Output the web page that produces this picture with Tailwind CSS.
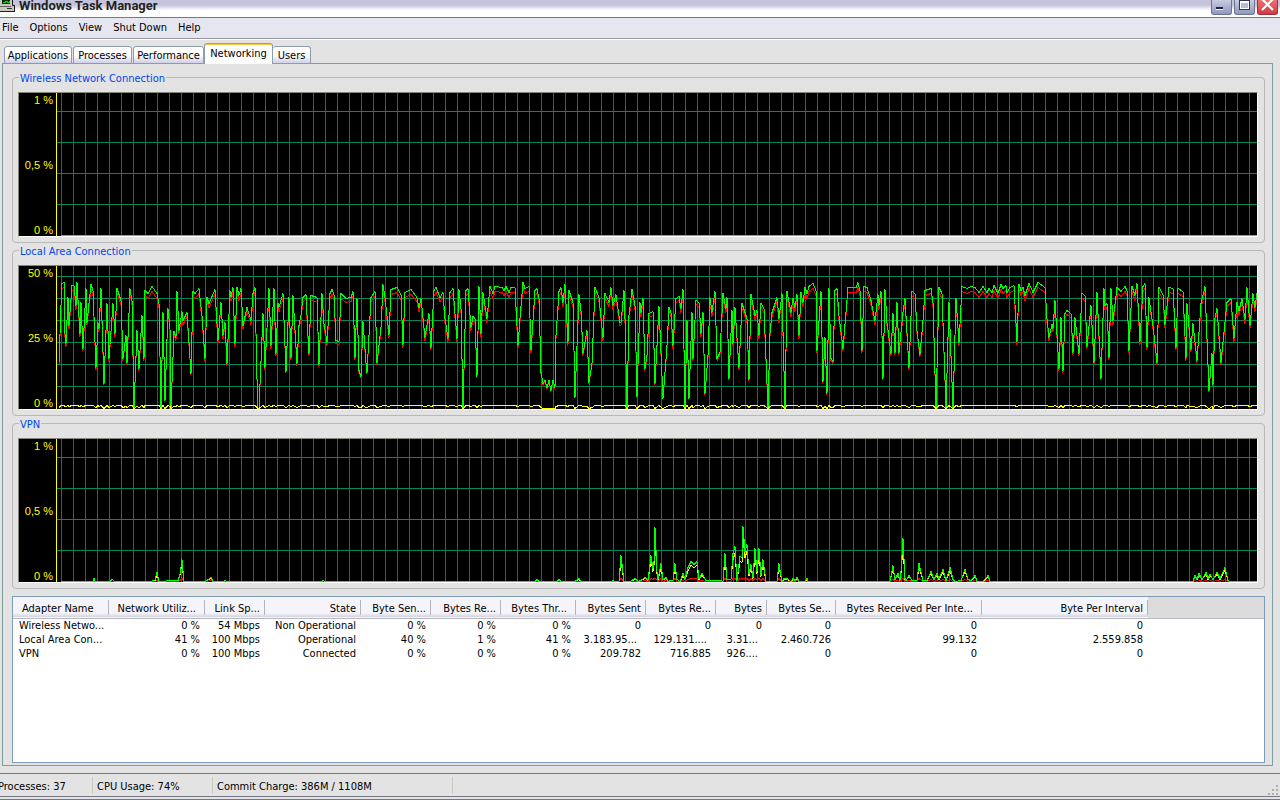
<!doctype html>
<html lang="en">
<head>
  <meta charset="UTF-8">
  <meta name="viewport" content="width=device-width, initial-scale=1.0">
  <title>Windows Task Manager</title>
  <script src="https://cdn.jsdelivr.net/npm/@tailwindcss/browser@4"></script>
</head>
<body class="flex h-screen flex-col overflow-hidden bg-[#e4e3e4] font-['DejaVu_Sans_Condensed','Noto_Sans',sans-serif] text-[11px] leading-[14px] text-black">
  <!-- Title bar -->
  <header class="flex h-[18px] shrink-0 items-start border-b border-[#77778a] bg-linear-to-b from-[#c4c4dc] from-30% to-white to-60% pr-[2px]">
    <svg class="h-4 w-[19px] shrink-0" viewBox="0 0 19 16" shape-rendering="crispEdges" aria-hidden="true">
      <path d="M0 0h12v6h2v5h-14z" fill="#c8c8c0" />
      <path d="M2 0h8v4h-8z" fill="#003000" />
      <path d="M3 2.5h2v-1h2v1h2v-1h1" fill="none" stroke="#00e000" />
      <path d="M12.5 0v5.500h2v6h-14.500" fill="none" stroke="#202020" />
      <path d="M0 6h11" fill="none" stroke="#606060" />
      <path d="M7 8h5v1h-5z" fill="#303030" />
    </svg>
    <h1 class="flex-1 font-[Roboto,sans-serif] text-[13px] leading-[12px] font-bold text-[#222]">Windows Task Manager</h1>
    <div class="flex gap-[2px]">
      <button aria-label="Minimize" class="h-[15px] w-[21px] rounded-b-[3px] border border-t-0 border-[#6c7494] bg-linear-to-b from-[#c8cce0] to-[#9098c0]"><svg viewBox="0 0 19 14" shape-rendering="crispEdges"><path d="M4 7h7v2h-7z" fill="#222244" /><path d="M4 9h7v1h-7z" fill="#fff" /></svg></button>
      <button aria-label="Maximize" class="h-[15px] w-[21px] rounded-b-[3px] border border-t-0 border-[#6c7494] bg-linear-to-b from-[#c8cce0] to-[#9098c0]"><svg viewBox="0 0 19 14" shape-rendering="crispEdges"><path d="M4 0h11v10h-11z" fill="#333355" /><path d="M5 1h9v8h-9z" fill="#fff" /><path d="M6 3h7v5h-7z" fill="#b8bcd8" /></svg></button>
      <button aria-label="Close" class="h-[15px] w-[21px] rounded-b-[3px] border border-t-0 border-[#a03040] bg-linear-to-b from-[#f07070] to-[#d03a40]"><svg viewBox="0 0 19 14"><path d="M4 -1l11 11M15 -1l-11 11" stroke="#fff" stroke-width="2" /></svg></button>
    </div>
  </header>

  <!-- Menu -->
  <nav class="flex h-[21px] shrink-0 items-center gap-[11px] border-b border-[#9494a4] bg-[#e6e6f0] px-[2px] pb-px shadow-[0_1px_0_#fff]">
    <button>File</button>
    <button>Options</button>
    <button>View</button>
    <button>Shut Down</button>
    <button>Help</button>
  </nav>

  <!-- Tabs -->
  <div role="tablist" class="relative z-10 -mb-px flex h-[25px] shrink-0 items-end pl-1 *:whitespace-nowrap">
    <button role="tab" class="mr-px h-[18px] w-[68px] rounded-t-[3px] border border-[#8c9cac] bg-linear-to-b from-white from-50% to-[#d0d0e8] pt-px">Applications</button>
    <button role="tab" class="mr-px h-[18px] w-[59px] rounded-t-[3px] border border-[#8c9cac] bg-linear-to-b from-white from-50% to-[#d0d0e8] pt-px">Processes</button>
    <button role="tab" class="h-[18px] w-[71px] rounded-t-[3px] border border-[#8c9cac] bg-linear-to-b from-white from-50% to-[#d0d0e8] pt-px">Performance</button>
    <button role="tab" aria-selected="true" class="h-[21px] w-[69px] rounded-t-[3px] border border-b-0 border-[#8c9cac] border-t-[#e68b2c] bg-white pb-px shadow-[inset_0_1px_0_#ffc73c]">Networking</button>
    <button role="tab" class="h-[18px] w-[38px] rounded-t-[3px] border border-l-0 border-[#8c9cac] bg-linear-to-b from-white from-50% to-[#d0d0e8] pt-px">Users</button>
  </div>

  <main class="mr-[7px] ml-[2px] flex min-h-0 flex-1 flex-col border border-[#7f9d9d] pt-[6px] pr-[7px] pb-[2px] pl-[9px]">
    <fieldset class="min-w-0 rounded border border-[#b8b8b8] pt-2 pr-[6px] pb-[5px] pl-[5px]">
      <legend class="ml-px px-px pt-1 leading-[10px] text-[#0046e5]">Wireless Network Connection</legend>
      <div class="flex h-[145px] border border-t-[#85857a] border-r-white border-b-white border-l-[#85857a] bg-black">
        <div class="flex w-[38px] shrink-0 flex-col justify-between border-r border-[#ff0] pt-px pr-[3px] text-right font-['Liberation_Sans',sans-serif] leading-3 text-[#ff0]"><span>1 %</span><span>0,5 %</span><span>0 %</span></div>
        <svg class="min-w-0 flex-1" viewBox="0 0 1200 143" preserveAspectRatio="none" shape-rendering="crispEdges" fill="none" data-chart="wireless" data-first="18" data-step="31"></svg>
      </div>
    </fieldset>
    <fieldset class="min-w-0 rounded border border-[#b8b8b8] pt-2 pr-[6px] pb-[5px] pl-[5px]">
      <legend class="ml-px px-px pt-1 leading-[10px] text-[#0046e5]">Local Area Connection</legend>
      <div class="flex h-[145px] border border-t-[#85857a] border-r-white border-b-white border-l-[#85857a] bg-black">
        <div class="flex w-[38px] shrink-0 flex-col justify-between border-r border-[#ff0] pt-px pr-[3px] text-right font-['Liberation_Sans',sans-serif] leading-3 text-[#ff0]"><span>50 %</span><span>25 %</span><span>0 %</span></div>
        <svg class="min-w-0 flex-1" viewBox="0 0 1200 143" preserveAspectRatio="none" shape-rendering="crispEdges" fill="none" data-chart="lan" data-first="10" data-step="22"></svg>
      </div>
    </fieldset>
    <fieldset class="min-w-0 rounded border border-[#b8b8b8] pt-2 pr-[6px] pb-[5px] pl-[5px]">
      <legend class="ml-px px-px pt-1 leading-[10px] text-[#0046e5]">VPN</legend>
      <div class="flex h-[145px] border border-t-[#85857a] border-r-white border-b-white border-l-[#85857a] bg-black">
        <div class="flex w-[38px] shrink-0 flex-col justify-between border-r border-[#ff0] pt-px pr-[3px] text-right font-['Liberation_Sans',sans-serif] leading-3 text-[#ff0]"><span>1 %</span><span>0,5 %</span><span>0 %</span></div>
        <svg class="min-w-0 flex-1" viewBox="0 0 1200 143" preserveAspectRatio="none" shape-rendering="crispEdges" fill="none" data-chart="vpn" data-first="18" data-step="31"></svg>
      </div>
    </fieldset>

    <!-- Adapter list -->
    <div class="mt-[7px] min-h-0 flex-1 overflow-hidden border border-[#7f9db9] bg-white">
      <table class="w-full table-fixed border-collapse text-right whitespace-nowrap">
        <colgroup>
          <col class="w-[96px]"><col class="w-[96px]"><col class="w-[60px]"><col class="w-[96px]"><col class="w-[70px]"><col class="w-[70px]"><col class="w-[75px]"><col class="w-[70px]"><col class="w-[70px]"><col class="w-[51px]"><col class="w-[69px]"><col class="w-[146px]"><col class="w-[166px]"><col>
        </colgroup>
        <thead>
          <tr class="h-[21px] border-b border-[#b8b8c4] bg-linear-to-b from-[#f4f4fa] from-80% to-[#d4d4dc] *:pt-[3px] *:font-normal [&>th:not(:last-child)]:bg-[linear-gradient(#b4b4c0,#b4b4c0)] [&>th:not(:last-child)]:bg-size-[1px_15px] [&>th:not(:last-child)]:bg-position-[right_3px] [&>th:not(:last-child)]:bg-no-repeat">
            <th class="pl-[9px] text-left">Adapter Name</th>
            <th class="pr-[9px]">Network Utiliz...</th>
            <th class="pr-[5px]">Link Sp...</th>
            <th class="pr-[5px]">State</th>
            <th class="pr-[5px]">Byte Sen...</th>
            <th class="pr-[5px]">Bytes Re...</th>
            <th class="pr-[9px]">Bytes Thr...</th>
            <th class="pr-[5px]">Bytes Sent</th>
            <th class="pr-[5px]">Bytes Re...</th>
            <th class="pr-[5px]">Bytes</th>
            <th class="pr-[5px]">Bytes Se...</th>
            <th class="pr-[9px]">Bytes Received Per Inte...</th>
            <th class="pr-[5px]">Byte Per Interval</th>
            <th class="bg-[#dcdcdc]"></th>
          </tr>
        </thead>
        <tbody class="[&_td]:pr-[5px] [&_td:first-child]:pl-[6px] [&_td:first-child]:text-left">
          <tr><td>Wireless Netwo...</td><td>0 %</td><td>54 Mbps</td><td>Non Operational</td><td>0 %</td><td>0 %</td><td>0 %</td><td>0</td><td>0</td><td>0</td><td>0</td><td>0</td><td>0</td><td></td></tr>
          <tr><td>Local Area Con...</td><td>41 %</td><td>100 Mbps</td><td>Operational</td><td>40 %</td><td>1 %</td><td>41 %</td><td class="pr-[9px]!">3.183.95...</td><td class="pr-[9px]!">129.131....</td><td class="pr-[9px]!">3.31...</td><td>2.460.726</td><td>99.132</td><td>2.559.858</td><td></td></tr>
          <tr><td>VPN</td><td>0 %</td><td>100 Mbps</td><td>Connected</td><td>0 %</td><td>0 %</td><td>0 %</td><td>209.782</td><td>716.885</td><td class="pr-[9px]!">926....</td><td>0</td><td>0</td><td>0</td><td></td></tr>
        </tbody>
      </table>
    </div>
  </main>

  <!-- Status bar -->
  <footer class="mt-[7px] flex h-[27px] shrink-0 items-center border-t border-b-4 border-[#77778a] *:pt-[3px] [border-bottom-style:double]">
    <span class="-ml-[2px] w-[94px]">Processes: 37</span>
    <span class="w-[120px] border-l border-[#c8c8bc] pl-1">CPU Usage: 74%</span>
    <span class="w-[240px] border-l border-[#c8c8bc] pl-1">Commit Charge: 386M / 1108M</span>
    <span class="flex-1 border-l border-[#c8c8bc]">&nbsp;</span>
    <svg class="h-[15px] w-3 self-end" viewBox="0 0 12 12" shape-rendering="crispEdges" aria-hidden="true"><path d="M8 1h2v2h-2zM4 5h2v2h-2zM8 5h2v2h-2zM0 9h2v2h-2zM4 9h2v2h-2zM8 9h2v2h-2z" fill="#b4b0a4" /></svg>
  </footer>

  <script>
    // Samples as "x,height" pairs, height measured up from the 0 % line
    const samples = {
      wireless: '4,0 1200,0',
      lan: `2,46 4,103 5,125 7,126 8,75 9,65 11,111 12,83 15,123 17,123 19,103 20,126 23,75 24,106 26,60 29,120 30,86 34,124
        36,118 39,41 41,86 42,80 44,120 47,25 50,105 52,50 56,105 58,75 60,120 64,108 66,50 69,73 70,46 73,120 75,108 77,0
        80,78 82,40 85,93 87,50 88,118 91,115 95,122 100,115 102,105 104,0 106,96 108,8 111,100 113,80 114,0 117,77 119,71
        120,117 122,78 125,97 126,88 130,96 134,35 136,117 138,115 142,120 145,93 148,50 150,111 152,105 158,119 161,68
        164,106 166,73 168,86 170,45 173,118 174,112 176,121 178,65 180,121 182,113 184,120 186,83 190,101 194,88 196,115
        198,121 200,30 201,0 202,0 206,95 208,41 212,120 214,63 217,120 219,55 221,105 222,101 226,115 229,37 232,111
        234,51 236,113 240,45 242,83 244,93 246,111 249,114 251,73 252,55 254,113 260,111 262,44 265,115 267,85 270,66
        273,115 275,119 277,114 279,68 282,67 284,115 289,110 294,111 296,117 298,51 300,110 302,38 304,32 306,87 309,46
        310,36 314,111 318,117 320,46 324,81 326,124 328,111 332,74 334,119 340,121 344,114 346,64 348,116 354,119 360,111
        362,101 364,110 368,71 372,95 374,61 377,118 379,121 383,111 386,116 388,90 391,70 393,116 396,120 400,70 402,119
        404,100 406,0 409,118 411,120 414,81 416,92 418,90 420,32 422,122 424,75 426,116 430,90 433,122 436,115 438,122
        445,121 447,118 449,122 452,116 454,121 458,121 461,63 463,90 466,126 468,120 472,122 474,58 478,118 480,120
        482,110 484,36 486,25 488,28 490,21 492,28 494,18 496,28 498,21 499,73 502,117 504,121 506,106 508,124 511,66
        512,118 516,106 518,11 522,114 524,98 526,55 530,78 532,26 535,45 538,121 542,111 546,71 548,115 552,106 554,121
        556,103 559,114 563,86 564,86 567,118 568,90 570,0 572,93 575,119 578,103 580,12 583,106 584,96 586,110 588,40
        590,53 592,95 596,97 598,25 602,102 606,10 610,63 612,101 614,96 616,63 619,110 622,112 624,100 626,119 628,0
        630,88 632,10 635,96 636,50 639,108 642,106 644,75 646,96 648,15 651,53 653,111 655,96 658,117 660,50 663,56
        666,115 669,100 670,111 672,30 675,98 676,65 678,101 682,41 685,105 690,90 692,29 694,114 698,93 700,98 702,73
        704,105 707,100 711,0 713,75 715,96 720,111 722,90 725,115 728,0 730,117 734,96 736,110 738,101 740,114 742,73
        744,116 746,106 748,121 750,115 752,122 756,125 759,118 760,58 764,117 766,27 768,71 770,15 772,120 774,50 776,47
        778,118 780,120 782,93 786,60 791,121 799,121 801,126 803,118 805,58 807,122 810,121 814,108 818,88 821,114
        822,103 824,117 826,30 828,119 830,86 834,55 836,95 838,56 840,106 842,56 846,96 848,110 852,41 855,117 858,115
        860,78 863,54 866,88 868,118 874,120 876,106 879,0 882,121 885,115 889,0 892,106 896,0 899,110 902,66 905,122
        910,120 914,122 918,121 922,116 926,122 930,116 932,120 935,116 937,123 941,115 944,124 946,120 949,123 950,116
        953,121 957,123 960,67 962,124 964,118 966,121 968,113 972,125 976,116 981,126 984,124 988,121 990,90 992,71
        995,84 996,80 998,108 1002,40 1004,91 1006,38 1008,95 1010,98 1014,95 1016,56 1018,91 1022,55 1025,115 1028,113
        1030,62 1034,103 1037,46 1040,116 1044,30 1047,120 1048,103 1050,105 1052,51 1054,120 1056,88 1060,121 1064,117
        1068,122 1070,118 1072,58 1075,122 1078,113 1080,125 1083,67 1086,122 1088,125 1090,61 1092,111 1096,83 1100,46
        1102,121 1106,114 1108,84 1112,121 1116,120 1119,61 1121,120 1126,117 1129,50 1130,105 1134,59 1136,85 1140,48
        1144,105 1148,122 1152,18 1155,55 1156,24 1158,90 1160,100 1164,46 1168,86 1170,106 1174,110 1177,70 1180,106
        1182,98 1185,110 1188,89 1190,121 1193,83 1196,115 1198,101 1200,115`,
      vpn: `4,0 36,0 37,3 38,0 53,0 55,2 58,0 94,0 96,1 98,1 100,9 102,0 116,1 121,1 123,7 125,22 127,0 148,0 150,1 154,4 156,0
        167,0 168,1 170,0 265,0 266,1 268,0 478,0 480,2 482,0 500,0 502,2 504,0 518,0 522,3 524,0 555,0 556,1 557,0 562,0
        564,26 567,0 573,0 578,3 581,0 584,1 588,4 591,1 594,26 596,13 597,20 598,54 600,10 601,2 604,18 606,2 609,4
        611,0 614,1 616,1 618,18 620,2 623,0 626,8 628,2 631,14 634,20 637,17 640,20 642,3 645,8 649,1 664,1 666,0
        668,28 670,2 674,2 676,28 678,35 680,1 683,25 685,24 686,55 688,30 690,37 692,8 694,17 696,4 698,33 700,10
        702,33 704,6 706,22 709,0 720,0 722,18 725,0 727,3 730,3 734,0 736,3 738,1 740,4 742,0 748,0 750,3 751,0 833,0
        836,16 838,2 841,8 843,1 844,10 846,43 848,3 849,1 852,6 855,1 860,1 862,18 866,1 870,1 874,10 877,2 880,8
        882,3 886,12 889,1 893,14 896,2 898,0 904,1 908,12 911,2 914,1 918,6 920,0 926,0 931,6 933,0 1136,0 1138,6
        1140,2 1142,8 1145,2 1149,9 1151,3 1153,7 1156,2 1160,9 1163,3 1168,14 1171,1 1173,0 1200,0`
    };

    const baseline = 142;

    function line(points, color) {
      const d = points.map(([x, h]) => `${x},${baseline - h + 0.5}`).join(' ');
      return `<polyline points="${d}" stroke="${color}" />`;
    }

    document.querySelectorAll('[data-chart]').forEach(function(svg) {
      const name = svg.dataset.chart;
      const total = samples[name].trim().split(/\s+/).map(pair => pair.split(',').map(Number));
      let grid = '';
      let rows = '';

      for (let x = 4; x < 1200; x += 12) {
        grid += `M${x + 0.5} 0V143`;
      }
      for (let y = +svg.dataset.first; y < 142; y += +svg.dataset.step) {
        rows += `M0 ${y + 0.5}H1200`;
      }

      let out = `<path d="${grid}" stroke="#0a7a44" /><path d="${rows}" stroke="#08865c" />`;
      if (name === 'lan') {
        out += line(total.map(([x, h]) => [x, Math.round(h * 0.96)]), '#f00');
        out += line(total, '#0f0');
        out += line(total.map(([x, h]) => [x, h > 85 ? 3 : h > 50 ? 2 : h > 28 ? 1 : 0]), '#ff0');
      } else {
        out += line(total.map(([x, h]) => [x, Math.round(h * 0.8)]), '#ff0');
        out += line(total.map(([x, h]) => [x, Math.min(3, Math.round(h * 0.15))]), '#f00');
        out += line(total, '#0f0');
      }
      svg.innerHTML = out;
    });
  </script>
</body>
</html>
